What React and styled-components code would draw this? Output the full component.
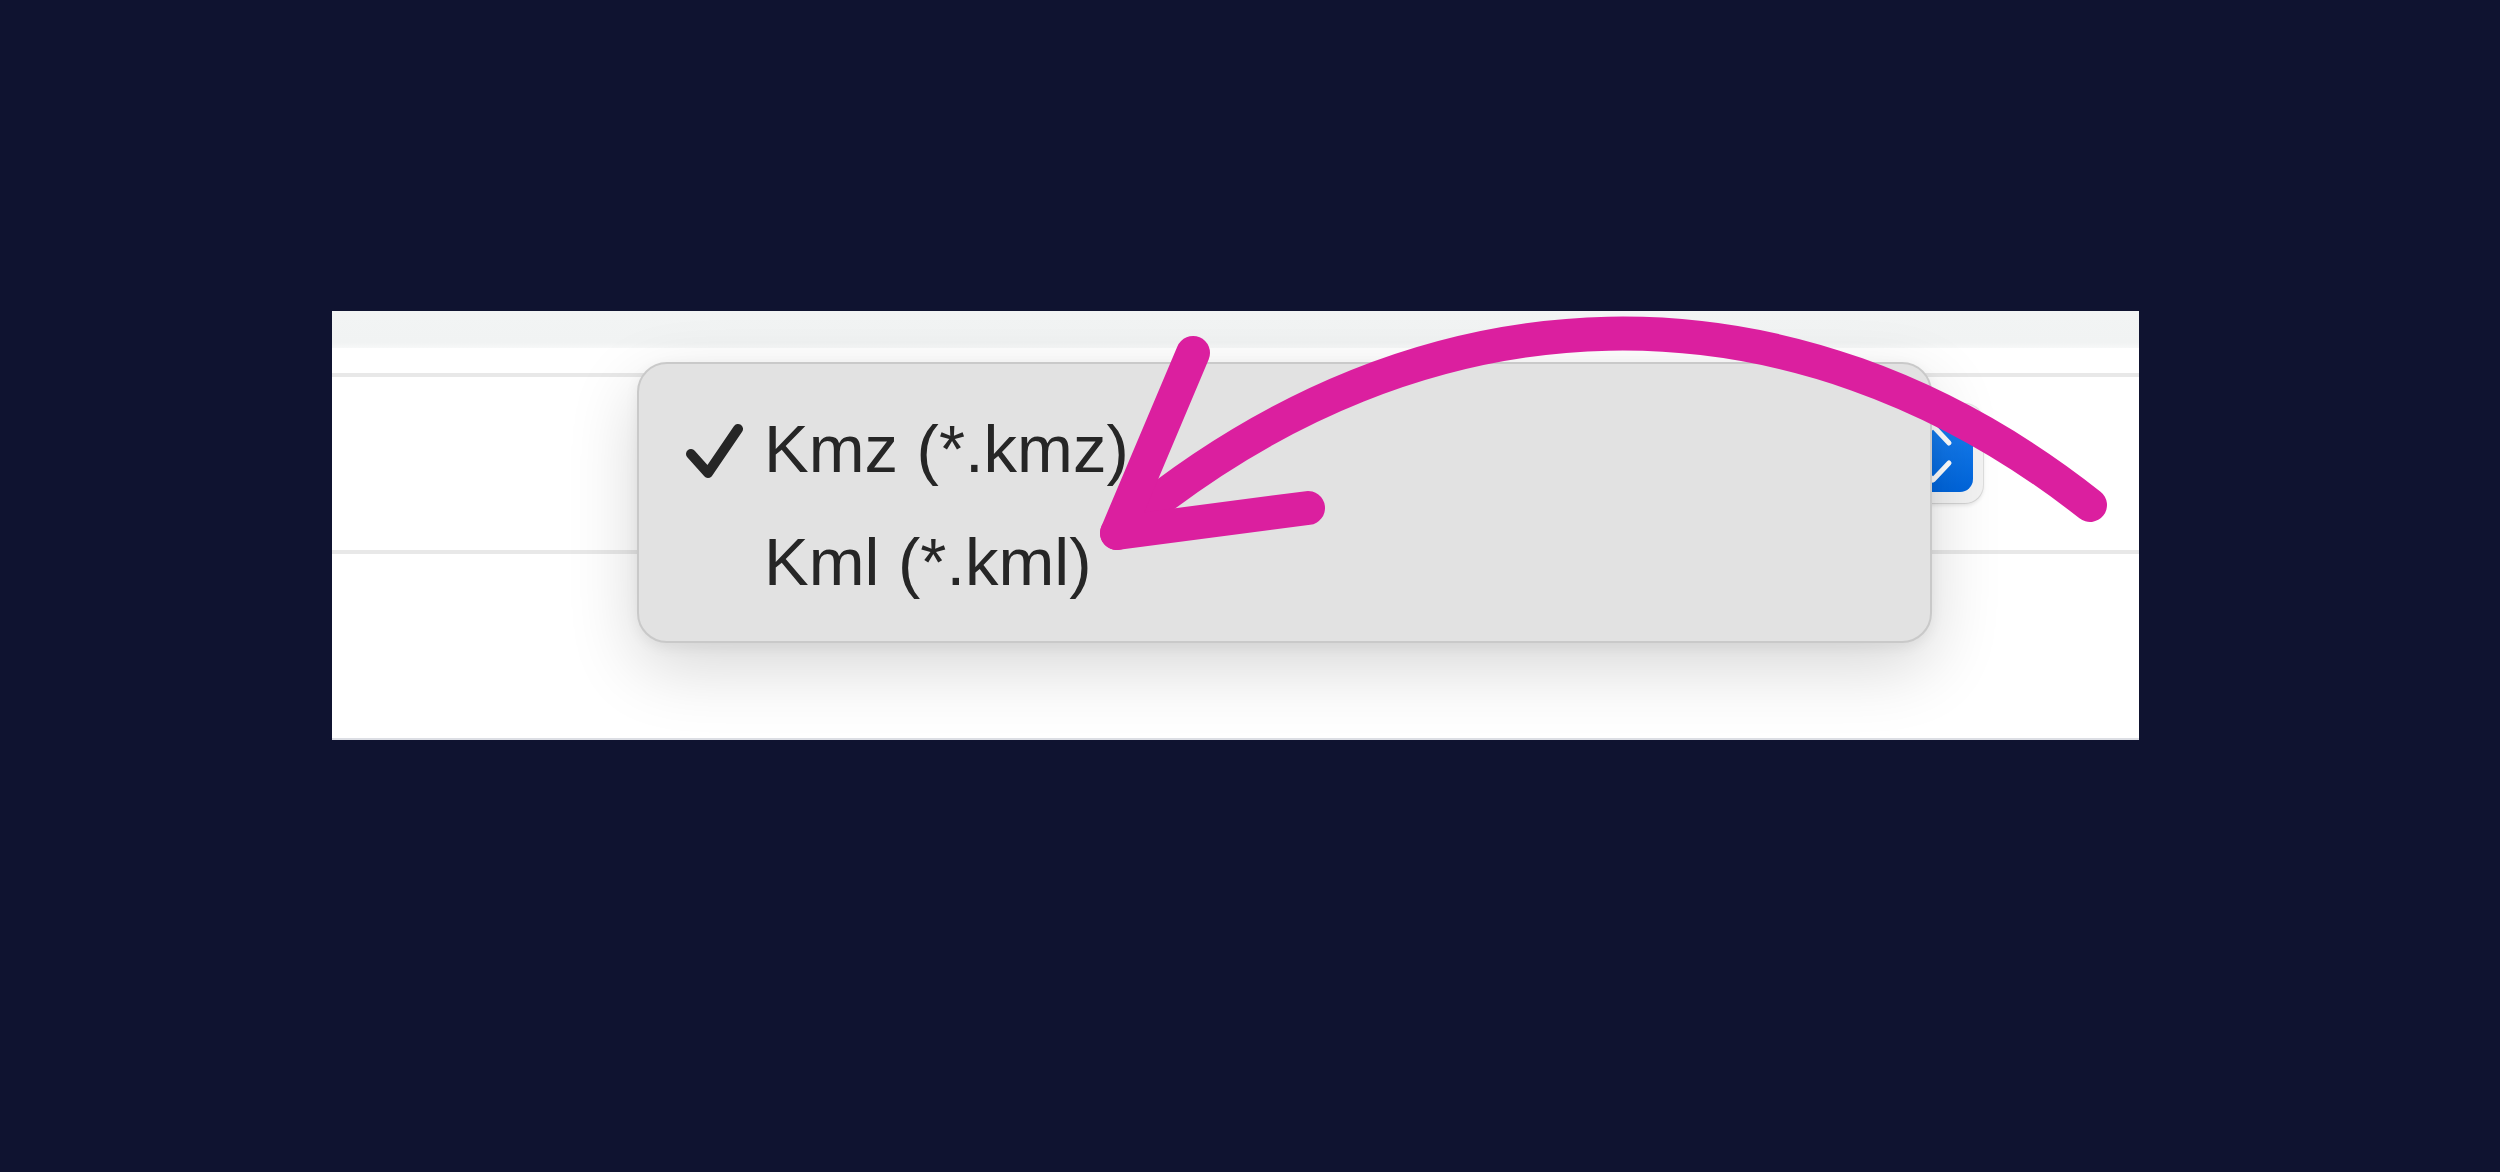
import React from "react";
import styled, { createGlobalStyle } from "styled-components";

const Global = createGlobalStyle`
  html, body { margin: 0; padding: 0; background: #0f1330; }
  body { font-family: "Liberation Sans", Arial, sans-serif; }
`;

const Page = styled.div`
  position: relative;
  width: 2500px;
  height: 1172px;
  overflow: hidden;
  background: #0f1330;
  padding: 311px 0 0 332px;
  box-sizing: border-box;
`;

const Panel = styled.div`
  position: relative;
  width: 1807px;
  height: 429px;
  background: #ffffff;
  display: flex;
  flex-direction: column;
  border-bottom: 2px solid #dcdee4;
  box-sizing: border-box;
`;

const TopStrip = styled.div`
  height: 37px;
  flex: none;
  background: linear-gradient(#f2f4f4 0%, #f1f3f3 85%, #f7f8f8 100%);
`;

const Gap = styled.div`
  height: ${(p) => p.$h}px;
  flex: none;
`;

const Divider = styled.div`
  height: 4px;
  flex: none;
  background: #e8e8e8;
`;

const Row = styled.div`
  height: 173px;
  flex: none;
  display: flex;
  justify-content: flex-end;
  align-items: flex-start;
  padding: 27px 156px 0 0;
  box-sizing: border-box;
`;

const SelectControl = styled.div`
  width: 500px;
  height: 99px;
  box-sizing: border-box;
  padding: 10px 10px 11px 10px;
  display: flex;
  justify-content: flex-end;
  background: #f3f3f3;
  border-radius: 18px;
  box-shadow: 0 0 0 1px rgba(0, 0, 0, 0.09), 0 2px 4px rgba(0, 0, 0, 0.12);
`;

const BlueButton = styled.div`
  width: 80px;
  height: 78px;
  border-radius: 13px;
  background: linear-gradient(#1b82f2, #0065dc);
  display: flex;
  align-items: center;
  justify-content: center;
`;

const Menu = styled.div`
  position: absolute;
  left: 305px;
  top: 51px;
  width: 1295px;
  height: 281px;
  box-sizing: border-box;
  background: #e2e2e2;
  border: 2px solid #c9c9c9;
  border-radius: 30px;
  padding: 28px 0 0 46px;
  box-shadow: 0 24px 70px rgba(0, 0, 0, 0.16), 0 4px 14px rgba(0, 0, 0, 0.06);
  display: flex;
  flex-direction: column;
`;

const Item = styled.div`
  display: flex;
  align-items: center;
  height: 113px;
  font-family: "Liberation Sans", Arial, sans-serif;
  font-size: 67px;
  line-height: 113px;
  color: #262626;
  white-space: nowrap;
`;

const CheckSlot = styled.div`
  width: 79px;
  height: 113px;
  flex: none;
  display: flex;
  align-items: flex-start;
  padding-top: 29px;
  box-sizing: border-box;
`;

const Overlay = styled.svg`
  position: absolute;
  left: 0;
  top: 0;
  pointer-events: none;
`;

const Check = () => (
  <svg width="60" height="60" viewBox="0 0 60 60">
    <path
      d="M6 33 L23 52 L53 8"
      fill="none"
      stroke="#262626"
      strokeWidth="10"
      strokeLinecap="round"
      strokeLinejoin="round"
    />
  </svg>
);

const Chevrons = () => (
  <svg width="80" height="78" viewBox="0 0 80 78">
    <path
      d="M24 29 L40 12 L56 29 M24 49 L40 66 L56 49"
      fill="none"
      stroke="#ffffff"
      strokeWidth="5"
      strokeLinecap="round"
      strokeLinejoin="round"
    />
  </svg>
);

const items = [
  { label: "Kmz (*.kmz)", checked: true },
  { label: "Kml (*.kml)", checked: false },
];

export default function App() {
  return (
    <>
      <Global />
      <Page>
        <Panel>
          <TopStrip />
          <Gap $h={25} />
          <Divider />
          <Row>
            <SelectControl>
              <BlueButton>
                <Chevrons />
              </BlueButton>
            </SelectControl>
          </Row>
          <Divider />
          <Menu>
            {items.map((it) => (
              <Item key={it.label}>
                <CheckSlot>{it.checked && <Check />}</CheckSlot>
                <span>{it.label}</span>
              </Item>
            ))}
          </Menu>
        </Panel>
        <Overlay width="2500" height="1172" viewBox="0 0 2500 1172">
          <g
            fill="none"
            stroke="#db1f9f"
            strokeWidth="34"
            strokeLinecap="round"
            strokeLinejoin="round"
          >
            <path d="M2090 505 C1795 272 1425 272 1117 533" />
            <path d="M1193 353 L1117 533 L1308 508" />
          </g>
        </Overlay>
      </Page>
    </>
  );
}
